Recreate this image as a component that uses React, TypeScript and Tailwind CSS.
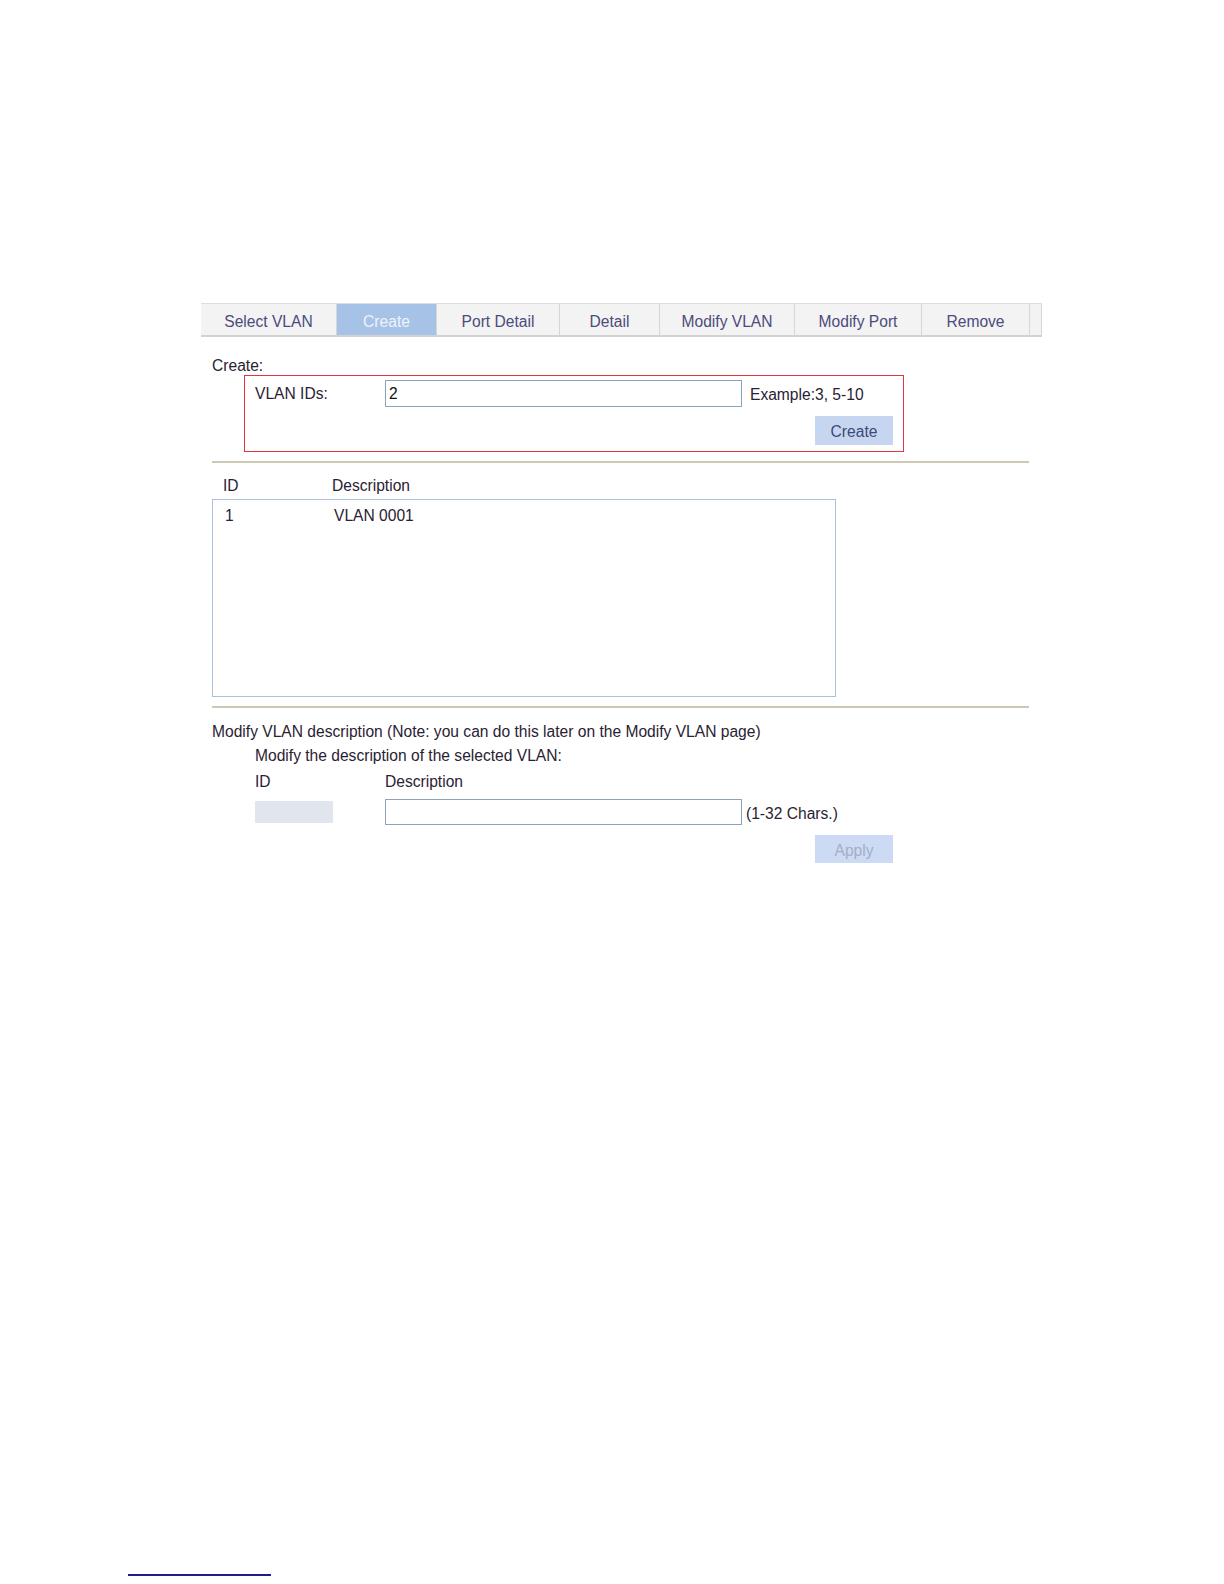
const TABS = [
  { label: "Select VLAN", w: "w-[136px]" },
  { label: "Create", w: "w-[100px]", active: true },
  { label: "Port Detail", w: "w-[123px]" },
  { label: "Detail", w: "w-[100px]" },
  { label: "Modify VLAN", w: "w-[135px]" },
  { label: "Modify Port", w: "w-[127px]" },
  { label: "Remove", w: "w-[108px]" },
];

const text = "text-[15.6px] leading-[18px] text-[#2a2233]";
const input =
  "block border border-[#8da2bd] bg-white px-[3px] text-[15.6px] leading-[18px] text-[#111] outline-none";
const divider = "h-[2px] w-[817px] bg-[#cdc9b2]";

export default function App() {
  return (
    <div className="flex h-[1584px] flex-col overflow-hidden bg-white font-['Liberation_Sans',Arial,sans-serif]">
      <div className="pl-[201px] pt-[303px]">
        {/* Tab strip */}
        <div className="flex h-[34px] w-[841px] border-t border-[#dedede] border-b-2 border-b-[#d2d2d2] bg-[#f3f3f3]">
          {TABS.map((t) => (
            <div
              key={t.label}
              className={`flex items-center justify-center border-r border-[#d6d6d6] pt-[5px] text-[15.6px] ${t.w} ${
                t.active ? "bg-[#a7c2e7] text-[#eef3fb]" : "text-[#4b4b7c]"
              }`}
            >
              {t.label}
            </div>
          ))}
          <div className="w-[12px] border-r border-[#d6d6d6]" />
        </div>

        <div className="pl-[11px]">
          <p className={`mt-[20px] ${text}`}>Create:</p>

          {/* Create box */}
          <div className="ml-[32px] h-[77px] w-[660px] border border-[#e2363c] pl-[10px] pt-[4px]">
            <div className="flex items-center">
              <span className={`w-[130px] ${text}`}>VLAN IDs:</span>
              <input className={`h-[27px] w-[357px] ${input}`} defaultValue="2" />
              <span className={`ml-[8px] mt-[3px] ${text}`}>Example:3, 5-10</span>
            </div>
            <div className="mt-[9px] flex">
              <button className="ml-[560px] h-[29px] w-[78px] bg-[#c6d6f0] pt-[2px] text-[15.6px] text-[#3b4a78]">
                Create
              </button>
            </div>
          </div>

          <div className={`mt-[9px] ${divider}`} />

          {/* VLAN list */}
          <div className={`mt-[14px] flex ${text}`}>
            <span className="w-[120px] pl-[11px]">ID</span>
            <span>Description</span>
          </div>
          <div className="mt-[4px] h-[198px] w-[624px] border border-[#a9c0e2] pt-[7px]">
            <div className={`flex ${text}`}>
              <span className="w-[121px] pl-[12px]">1</span>
              <span>VLAN 0001</span>
            </div>
          </div>

          <div className={`mt-[9px] ${divider}`} />

          {/* Modify description */}
          <p className={`mt-[15px] ${text}`}>
            Modify VLAN description (Note: you can do this later on the Modify VLAN page)
          </p>
          <div className="pl-[43px]">
            <p className={`mt-[6px] ${text}`}>Modify the description of the selected VLAN:</p>
            <div className={`mt-[8px] flex ${text}`}>
              <span className="w-[130px]">ID</span>
              <span>Description</span>
            </div>
            <div className="mt-[8px] flex items-center">
              <div className="mr-[52px] h-[22px] w-[78px] bg-[#e1e6ee]" />
              <input className={`h-[26px] w-[357px] ${input}`} />
              <span className={`ml-[4px] mt-[4px] ${text}`}>(1-32 Chars.)</span>
            </div>
            <div className="mt-[10px] flex">
              <button className="ml-[560px] h-[28px] w-[78px] bg-[#ccdbf3] pt-[3px] text-[15.6px] text-[#a3aec6]">
                Apply
              </button>
            </div>
          </div>
        </div>
      </div>

      {/* Footnote rule */}
      <div className="ml-[128px] mt-[711px] h-[2px] w-[143px] shrink-0 bg-[#1d1d8a]" />
    </div>
  );
}
